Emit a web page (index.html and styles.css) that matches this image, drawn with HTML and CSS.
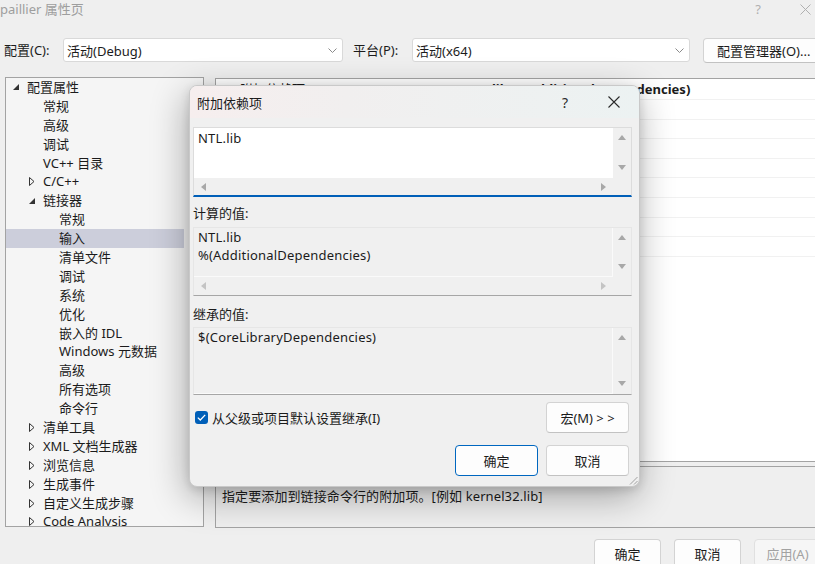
FILE: index.html
```html
<!DOCTYPE html>
<html lang="zh-CN">
<head>
<meta charset="utf-8">
<title>paillier 属性页</title>
<link rel="stylesheet" href="styles.css">
</head>
<body>
<div class="window">
  <header class="win-title">
    <span class="win-caption">paillier 属性页</span>
    <span class="win-help">?</span>
    <span class="win-close"><svg width="11" height="11" viewBox="0 0 11 11"><path d="M0.5 0.5L10.5 10.5M10.5 0.5L0.5 10.5" stroke="#b0b0b0" stroke-width="1"/></svg></span>
  </header>

  <div class="config-bar">
    <span class="cfg-label">配置(C):</span>
    <div class="combo combo-config"><span>活动(Debug)</span><svg class="chev" width="9" height="5" viewBox="0 0 9 5"><path d="M0.5 0.5L4.5 4.5L8.5 0.5" fill="none" stroke="#8a8a8a" stroke-width="1"/></svg></div>
    <span class="cfg-label plat">平台(P):</span>
    <div class="combo combo-platform"><span>活动(x64)</span><svg class="chev" width="9" height="5" viewBox="0 0 9 5"><path d="M0.5 0.5L4.5 4.5L8.5 0.5" fill="none" stroke="#8a8a8a" stroke-width="1"/></svg></div>
    <button class="btn btn-cfg">配置管理器(O)...</button>
  </div>

  <div class="main">
    <nav class="tree">
      <div class="tree-list">
        <div class="node l0"><span class="exp"><svg width="6" height="6" viewBox="0 0 6 6"><polygon points="6,0 6,6 0,6" fill="#333"/></svg></span><span>配置属性</span></div>
        <div class="node l1"><span class="exp"></span><span>常规</span></div>
        <div class="node l1"><span class="exp"></span><span>高级</span></div>
        <div class="node l1"><span class="exp"></span><span>调试</span></div>
        <div class="node l1"><span class="exp"></span><span>VC++ 目录</span></div>
        <div class="node l1"><span class="exp"><svg width="6" height="9" viewBox="0 0 6 9"><polygon points="0.5,0.5 5,4.5 0.5,8.5" fill="none" stroke="#333" stroke-width="1"/></svg></span><span>C/C++</span></div>
        <div class="node l1"><span class="exp"><svg width="6" height="6" viewBox="0 0 6 6"><polygon points="6,0 6,6 0,6" fill="#333"/></svg></span><span>链接器</span></div>
        <div class="node l2"><span class="exp"></span><span>常规</span></div>
        <div class="node l2 sel"><span class="exp"></span><span>输入</span></div>
        <div class="node l2"><span class="exp"></span><span>清单文件</span></div>
        <div class="node l2"><span class="exp"></span><span>调试</span></div>
        <div class="node l2"><span class="exp"></span><span>系统</span></div>
        <div class="node l2"><span class="exp"></span><span>优化</span></div>
        <div class="node l2"><span class="exp"></span><span>嵌入的 IDL</span></div>
        <div class="node l2"><span class="exp"></span><span>Windows 元数据</span></div>
        <div class="node l2"><span class="exp"></span><span>高级</span></div>
        <div class="node l2"><span class="exp"></span><span>所有选项</span></div>
        <div class="node l2"><span class="exp"></span><span>命令行</span></div>
        <div class="node l1"><span class="exp"><svg width="6" height="9" viewBox="0 0 6 9"><polygon points="0.5,0.5 5,4.5 0.5,8.5" fill="none" stroke="#333" stroke-width="1"/></svg></span><span>清单工具</span></div>
        <div class="node l1"><span class="exp"><svg width="6" height="9" viewBox="0 0 6 9"><polygon points="0.5,0.5 5,4.5 0.5,8.5" fill="none" stroke="#333" stroke-width="1"/></svg></span><span>XML 文档生成器</span></div>
        <div class="node l1"><span class="exp"><svg width="6" height="9" viewBox="0 0 6 9"><polygon points="0.5,0.5 5,4.5 0.5,8.5" fill="none" stroke="#333" stroke-width="1"/></svg></span><span>浏览信息</span></div>
        <div class="node l1"><span class="exp"><svg width="6" height="9" viewBox="0 0 6 9"><polygon points="0.5,0.5 5,4.5 0.5,8.5" fill="none" stroke="#333" stroke-width="1"/></svg></span><span>生成事件</span></div>
        <div class="node l1"><span class="exp"><svg width="6" height="9" viewBox="0 0 6 9"><polygon points="0.5,0.5 5,4.5 0.5,8.5" fill="none" stroke="#333" stroke-width="1"/></svg></span><span>自定义生成步骤</span></div>
        <div class="node l1"><span class="exp"><svg width="6" height="9" viewBox="0 0 6 9"><polygon points="0.5,0.5 5,4.5 0.5,8.5" fill="none" stroke="#333" stroke-width="1"/></svg></span><span>Code Analysis</span></div>
      </div>
      <div class="tree-gutter"></div>
    </nav>

    <section class="props">
      <div class="grid">
        <div class="prow first"><span class="pname">附加依赖项</span><span class="pval">NTL.lib;%(AdditionalDependencies)</span></div>
        <div class="prow"><span class="pname">忽略所有默认库</span><span class="pval"></span></div>
        <div class="prow"><span class="pname">忽略特定默认库</span><span class="pval"></span></div>
        <div class="prow"><span class="pname">模块定义文件</span><span class="pval"></span></div>
        <div class="prow"><span class="pname">将模块添加到程序集</span><span class="pval"></span></div>
        <div class="prow"><span class="pname">嵌入托管资源文件</span><span class="pval"></span></div>
        <div class="prow"><span class="pname">强制符号引用</span><span class="pval"></span></div>
        <div class="prow"><span class="pname">延迟加载的 DLL</span><span class="pval"></span></div>
        <div class="prow"><span class="pname">程序集链接资源</span><span class="pval"></span></div>
      </div>
      <div class="desc">
        <div class="desc-title">附加依赖项</div>
        <div class="desc-text">指定要添加到链接命令行的附加项。[例如 kernel32.lib]</div>
      </div>
    </section>
  </div>

  <footer class="footer">
    <button class="btn fbtn">确定</button>
    <button class="btn fbtn">取消</button>
    <button class="btn fbtn disabled">应用(A)</button>
  </footer>

  <div class="dialog">
    <div class="dlg-title">
      <span class="dlg-caption">附加依赖项</span>
      <span class="dlg-help">?</span>
      <span class="dlg-close"><svg width="12" height="12" viewBox="0 0 12 12"><path d="M0.5 0.5L11.5 11.5M11.5 0.5L0.5 11.5" stroke="#2b2b2b" stroke-width="1.1"/></svg></span>
    </div>
    <div class="dlg-body">
      <div class="editbox focused">
        <div class="edit-text">NTL.lib</div>
        <div class="vscroll">
          <svg width="8" height="5" viewBox="0 0 8 5"><polygon points="4,0 8,5 0,5" fill="#a8a8a8"/></svg>
          <svg width="8" height="5" viewBox="0 0 8 5"><polygon points="0,0 8,0 4,5" fill="#a8a8a8"/></svg>
        </div>
        <div class="hscroll">
          <svg width="5" height="8" viewBox="0 0 5 8"><polygon points="5,0 5,8 0,4" fill="#a8a8a8"/></svg>
          <svg width="5" height="8" viewBox="0 0 5 8"><polygon points="0,0 5,4 0,8" fill="#a8a8a8"/></svg>
        </div>
        <div class="corner"></div>
      </div>

      <div class="dlg-label">计算的值:</div>
      <div class="editbox readonly">
        <div class="edit-text">NTL.lib<br>%(AdditionalDependencies)</div>
        <div class="vscroll">
          <svg width="8" height="5" viewBox="0 0 8 5"><polygon points="4,0 8,5 0,5" fill="#a8a8a8"/></svg>
          <svg width="8" height="5" viewBox="0 0 8 5"><polygon points="0,0 8,0 4,5" fill="#a8a8a8"/></svg>
        </div>
        <div class="hscroll">
          <svg width="5" height="8" viewBox="0 0 5 8"><polygon points="5,0 5,8 0,4" fill="#c4c4c4"/></svg>
          <svg width="5" height="8" viewBox="0 0 5 8"><polygon points="0,0 5,4 0,8" fill="#c4c4c4"/></svg>
        </div>
        <div class="corner"></div>
      </div>

      <div class="dlg-label second">继承的值:</div>
      <div class="editbox readonly novscroll">
        <div class="edit-text">$(CoreLibraryDependencies)</div>
        <div class="vscroll">
          <svg width="8" height="5" viewBox="0 0 8 5"><polygon points="4,0 8,5 0,5" fill="#a8a8a8"/></svg>
          <svg width="8" height="5" viewBox="0 0 8 5"><polygon points="0,0 8,0 4,5" fill="#a8a8a8"/></svg>
        </div>
      </div>

      <div class="dlg-row">
        <label class="check">
          <span class="checkbox"><svg width="9" height="7" viewBox="0 0 9 7"><path d="M0.8 3.6L3.3 6L8.2 0.9" fill="none" stroke="#fff" stroke-width="1.3"/></svg></span>
          <span>从父级或项目默认设置继承(I)</span>
        </label>
        <button class="btn dbtn">宏(M) &gt; &gt;</button>
      </div>

      <div class="dlg-actions">
        <button class="btn dbtn primary">确定</button>
        <button class="btn dbtn">取消</button>
      </div>
    </div>
    <svg class="grip" width="9" height="9" viewBox="0 0 9 9"><path d="M8.5 1L1 8.5M8.5 5L5 8.5" stroke="#a0a0a0" stroke-width="1"/></svg>
  </div>
</div>
</body>
</html>
```

FILE: styles.css
```css
* { box-sizing: border-box; }
html, body { margin: 0; padding: 0; }
body {
  width: 815px;
  height: 564px;
  overflow: hidden;
  background: #efefef;
  font-family: "Noto Sans", "Noto Sans CJK SC", sans-serif;
  font-size: 13px;
  color: #1b1b1b;
}
.window { position: relative; width: 815px; height: 564px; overflow: hidden; }

/* window title */
.win-title { display: flex; align-items: center; height: 18px; }
.win-caption { flex: 1; color: #9e9e9e; line-height: 18px; }
.win-help { width: 20px; text-align: center; color: #b0b0b0; line-height: 18px; margin-right: 27px; }
.win-close { width: 20px; display: flex; justify-content: center; }

/* config bar */
.config-bar { display: flex; align-items: center; height: 24px; margin-top: 20px; padding-left: 4px; }
.config-bar > * { flex: none; }
.cfg-label { width: 59px; line-height: 24px; white-space: nowrap; }
.cfg-label.plat { margin-left: 10px; }
.combo {
  height: 24px;
  background: #fff;
  border: 1px solid #d9d9d9;
  border-radius: 3px;
  display: flex;
  align-items: center;
  justify-content: space-between;
  padding: 0 5px 0 3px;
}
.combo-config { width: 280px; }
.combo-platform { width: 278px; }

.btn {
  font: inherit;
  color: #1b1b1b;
  background: #fdfdfd;
  border: 1px solid #d3d3d3;
  border-bottom-color: #c2c2c2;
  border-radius: 4px;
  padding: 0;
  white-space: nowrap;
}
.btn-cfg { margin-left: 13px; width: 120px; height: 25px; text-align: left; padding-left: 13px; }

/* main */
.main { display: flex; margin-top: 15px; height: 451px; }
.tree {
  width: 199px;
  height: 450px;
  margin-left: 5px;
  border: 1px solid #a3a3a3;
  background: #f5f5f5;
  display: flex;
  overflow: hidden;
  flex: none;
}
.tree-list { width: 178px; flex: none; }
.tree-gutter { flex: 1; }
.node { height: 18.9px; line-height: 18.9px; display: flex; align-items: center; white-space: nowrap; }
.node.sel { background: #cccedb; }
.l0 { padding-left: 5px; }
.l1 { padding-left: 21px; }
.l2 { padding-left: 37px; }
.exp { width: 16px; flex: none; display: flex; align-items: center; }
.exp svg { margin-left: 2px; }

.props { flex: 1; margin-left: 11px; display: flex; flex-direction: column; gap: 4px; }
.grid {
  margin-top: 1px;
  height: 384px;
  background: #fff;
  border: 1px solid #a3a3a3;
  border-right: none;
}
.prow {
  display: grid;
  grid-template-columns: 246px 1fr;
  height: 19.6px;
  line-height: 19px;
  border-bottom: 1px solid #f1f1f1;
  white-space: nowrap;
  overflow: hidden;
}
.prow.first { height: 21px; line-height: 20px; }
.pname { padding-left: 24px; }
.pval { padding-left: 1px; }
.prow.first .pval { font-weight: 700; }

.desc {
  height: 62px;
  border: 1px solid #a3a3a3;
  border-right: none;
  padding: 1px 6px;
  background: #efefef;
}
.desc-title { font-weight: 700; line-height: 19px; }
.desc-text { line-height: 19px; letter-spacing: 0.1px; }

/* footer */
.footer { display: flex; justify-content: flex-end; gap: 13px; margin-top: 11px; margin-right: -6px; }
.fbtn { width: 67px; height: 28px; flex: none; }
.fbtn.disabled { color: #a2a2a2; background: #f6f6f6; border-color: #e0e0e0; }

/* dialog */
.dialog {
  position: absolute;
  left: 189px;
  top: 85px;
  width: 451px;
  height: 402px;
  background: #f0f0f0;
  border: 1px solid #c9c9c9;
  border-radius: 8px;
  overflow: hidden;
  box-shadow: -2px 10px 36px rgba(0, 0, 0, 0.32), 0 3px 10px rgba(0, 0, 0, 0.12);
}
.dlg-title {
  height: 32px;
  display: flex;
  align-items: center;
  padding-left: 7px;
  background: linear-gradient(90deg, #f6eeee 0%, #f1efef 35%, #ecf2f2 100%);
}
.dlg-caption { flex: 1; }
.dlg-help { width: 20px; text-align: center; font-size: 14px; color: #2b2b2b; margin-right: 29px; }
.dlg-close { width: 20px; display: flex; justify-content: center; margin-right: 15px; }

.dlg-body { padding: 9px 7px 10px 3px; display: flex; flex-direction: column; }

.editbox {
  display: grid;
  grid-template-columns: 1fr 18px;
  grid-template-rows: 50px 17px;
  border: 1px solid #dcdcdc;
  height: 70px;
}
.editbox.focused { border-bottom: 2px solid #005fb8; }
.editbox.readonly { height: 69px; grid-template-rows: 49px 18px; border-color: #e6e6e6; border-bottom-color: #a6a6a6; }
.editbox.novscroll { height: 68px; grid-template-rows: 66px; }
.edit-text { background: #fff; padding: 1px 4px 0; line-height: 18px; white-space: nowrap; overflow: hidden; letter-spacing: 0.2px; }
.editbox.readonly .edit-text { background: #f0f0f0; border-right: 1px solid #fafafa; border-bottom: 1px solid #fafafa; line-height: 17.5px; }
.vscroll {
  background: #f0f0f0;
  display: flex;
  flex-direction: column;
  justify-content: space-between;
  align-items: center;
  padding: 7px 0 8px;
}
.hscroll {
  background: #f0f0f0;
  display: flex;
  justify-content: space-between;
  align-items: center;
  padding: 0 7px 0 7px;
}
.corner { background: #f0f0f0; }

.dlg-label { line-height: 17px; padding: 8px 0 5px; }
.dlg-label.second { padding: 10px 0 4px; }

.dlg-row { display: flex; align-items: center; justify-content: space-between; margin-top: 7px; height: 31px; padding-right: 3px; }
.check { display: flex; align-items: center; gap: 4px; padding-left: 2px; }
.checkbox {
  width: 13px;
  height: 13px;
  border-radius: 3px;
  background: #005fb8;
  display: flex;
  align-items: center;
  justify-content: center;
}
.dbtn { width: 83px; height: 31px; flex: none; }
.dlg-actions { display: flex; justify-content: flex-end; gap: 8px; margin-top: 12px; padding-right: 3px; }
.dbtn.primary { border: 1px solid #0067c0; }

.grip { position: absolute; right: 1px; bottom: 1px; }
```
